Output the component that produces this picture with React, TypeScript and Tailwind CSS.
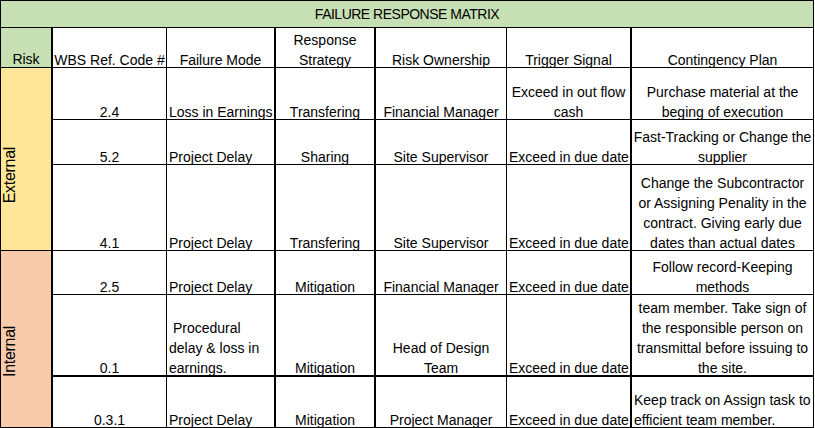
type Row = {
  code: string;
  mode: string[];
  strategy: string;
  owner: string[];
  trigger: string[];
  triggerLeft?: boolean;
  plan: string[];
  planLeft?: boolean;
};

const rows: Row[] = [
  {
    code: '2.4',
    mode: ['Loss in Earnings'],
    strategy: 'Transfering',
    owner: ['Financial Manager'],
    trigger: ['Exceed in out flow', 'cash'],
    plan: ['Purchase material at the', 'beging of execution'],
  },
  {
    code: '5.2',
    mode: ['Project Delay'],
    strategy: 'Sharing',
    owner: ['Site Supervisor'],
    trigger: ['Exceed in due date'],
    triggerLeft: true,
    plan: ['Fast-Tracking or Change the', 'supplier'],
  },
  {
    code: '4.1',
    mode: ['Project Delay'],
    strategy: 'Transfering',
    owner: ['Site Supervisor'],
    trigger: ['Exceed in due date'],
    triggerLeft: true,
    plan: [
      'Change the Subcontractor',
      'or Assigning Penality in the',
      'contract. Giving early due',
      'dates than actual dates',
    ],
  },
  {
    code: '2.5',
    mode: ['Project Delay'],
    strategy: 'Mitigation',
    owner: ['Financial Manager'],
    trigger: ['Exceed in due date'],
    triggerLeft: true,
    plan: ['Follow record-Keeping', 'methods'],
  },
  {
    code: '0.1',
    mode: ['\u00a0Procedural', 'delay & loss in', 'earnings.'],
    strategy: 'Mitigation',
    owner: ['Head of Design', 'Team'],
    trigger: ['Exceed in due date'],
    triggerLeft: true,
    plan: [
      'team member. Take sign of',
      'the responsible person on',
      'transmittal before issuing to',
      'the site.',
    ],
  },
  {
    code: '0.3.1',
    mode: ['Project Delay'],
    strategy: 'Mitigation',
    owner: ['Project Manager'],
    trigger: ['Exceed in due date'],
    triggerLeft: true,
    plan: ['Keep track on Assign task to', 'efficient team member.'],
    planLeft: true,
  },
];

// each line keeps a 20px step but sits ~3px low, like the sheet
function Cell({
  lines,
  left,
  thick,
  bottom,
}: {
  lines: string[];
  left?: boolean;
  thick?: boolean;
  bottom?: boolean;
}) {
  return (
    <div
      className={
        'flex flex-col justify-end overflow-hidden whitespace-nowrap border-black ' +
        (thick ? 'border-r-2 ' : 'border-r ') +
        (bottom ? 'border-b-2 ' : 'border-b ') +
        (left ? 'pl-[2px] text-left' : 'text-center')
      }
    >
      {lines.map((l, i) => (
        <div key={i} className="h-[20px] shrink-0 leading-[26px]">
          {l}
        </div>
      ))}
    </div>
  );
}

export default function App() {
  return (
    <div className="h-[428px] w-[815px] bg-white font-['Liberation_Sans',Arial,sans-serif] text-[14px] leading-[20px] text-black">
      <div className="grid w-[814px] grid-cols-[52px_114px_109px_100px_131px_125px_182px] grid-rows-[27px_40px_52px_45px_86px_44px_82px_51px] border-l border-t border-black">
        <div className="col-span-7 flex items-center justify-center border-b border-r border-black bg-[#c6e0b4] tracking-[-0.5px]">
          FAILURE RESPONSE MATRIX
        </div>

        <div className="flex flex-col justify-end overflow-hidden border-b border-r-2 border-black bg-[#c6e0b4] text-center">
          <div className="h-[20px] leading-[24px]">Risk</div>
        </div>
        <Cell lines={['WBS Ref. Code #']} />
        <Cell lines={['Failure Mode']} thick />
        <Cell lines={['Response', 'Strategy']} thick />
        <Cell lines={['Risk Ownership']} />
        <Cell lines={['Trigger Signal']} thick />
        <Cell lines={['Contingency Plan']} />

        <div className="row-span-3 flex items-center border-b border-r-2 border-black bg-[#ffe699] pt-[32px]">
          <span className="rotate-180 text-[16px] leading-[18px] tracking-[-0.3px] [writing-mode:vertical-rl]">
            External
          </span>
        </div>
        {rows.slice(0, 3).map((r) => (
          <RowCells key={r.code} r={r} />
        ))}

        <div className="row-span-3 flex items-center border-b border-r-2 border-black bg-[#f8cbad] pt-[24px]">
          <span className="rotate-180 text-[16px] leading-[18px] tracking-[-0.3px] [writing-mode:vertical-rl]">
            Internal
          </span>
        </div>
        {rows.slice(3).map((r) => (
          <RowCells key={r.code} r={r} bottom={r.code === '0.1'} />
        ))}
      </div>
    </div>
  );
}

function RowCells({ r, bottom }: { r: Row; bottom?: boolean }) {
  return (
    <>
      <Cell lines={[r.code]} bottom={bottom} />
      <Cell lines={r.mode} left thick bottom={bottom} />
      <Cell lines={[r.strategy]} thick bottom={bottom} />
      <Cell lines={r.owner} bottom={bottom} />
      <Cell lines={r.trigger} left={r.triggerLeft} thick bottom={bottom} />
      <Cell lines={r.plan} left={r.planLeft} bottom={bottom} />
    </>
  );
}
